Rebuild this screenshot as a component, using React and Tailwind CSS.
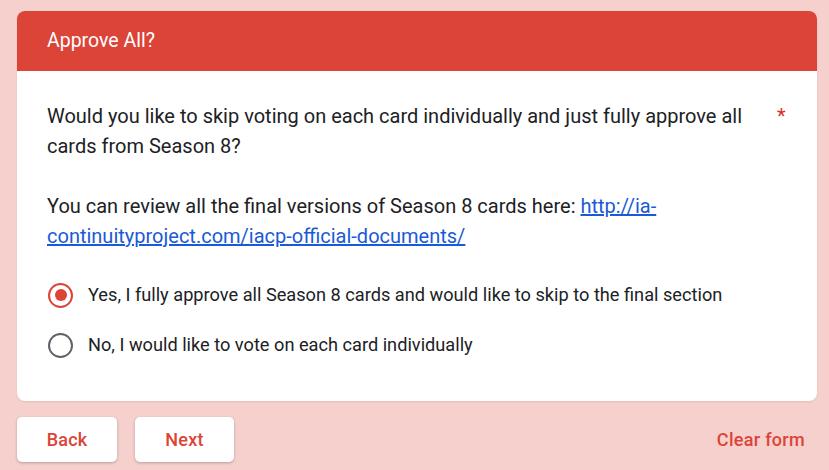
import React from "react";

function Radio({ checked }) {
  return (
    <div
      className={
        "w-[25px] h-[25px] rounded-full border-[2.5px] flex items-center justify-center shrink-0 " +
        (checked ? "border-[#db4437]" : "border-[#5f6368]")
      }
    >
      {checked && <div className="w-[12px] h-[12px] rounded-full bg-[#db4437]" />}
    </div>
  );
}

export default function App() {
  return (
    <div
      className="w-[829px] h-[470px] bg-[#f6d0cd] pl-[17px] pt-[11px] overflow-hidden"
      style={{ fontFamily: "Roboto, 'Liberation Sans', sans-serif" }}
    >
      <div className="w-[800px] bg-white rounded-[8px] overflow-hidden shadow-[0_1px_2px_rgba(0,0,0,0.08)]">
        <div className="h-[60px] bg-[#db4437] px-[30px] flex items-center">
          <span className="text-white text-[19.5px]">Approve All?</span>
        </div>
        <div className="pt-[30px] px-[30px] pb-[31px]">
          <div className="flex">
            <div className="flex-1 text-[20px] leading-[30px] text-[#202124]">
              Would you like to skip voting on each card individually and just fully approve all cards from Season 8?
              <br />
              <br />
              You can review all the final versions of Season 8 cards here:{" "}
              <a href="#" className="text-[#1a5ad6] underline">
                http://ia-continuityproject.com/iacp-official-documents/
              </a>
            </div>
            <span className="text-[#d93025] text-[20px] leading-[30px] w-[10px] ml-[8px] shrink-0">*</span>
          </div>
          <div className="mt-[19px]">
            <div className="h-[50px] flex items-center gap-[15px] pl-[1px]">
              <Radio checked />
              <span className="text-[18.2px] text-[#202124]">
                Yes, I fully approve all Season 8 cards and would like to skip to the final section
              </span>
            </div>
            <div className="h-[50px] flex items-center gap-[15px] pl-[1px]">
              <Radio />
              <span className="text-[18.2px] text-[#202124]">
                No, I would like to vote on each card individually
              </span>
            </div>
          </div>
        </div>
      </div>
      <div className="w-[800px] mt-[16px] flex items-center">
        <button className="w-[100px] h-[45px] bg-white rounded-[5px] text-[#db4437] text-[18px] font-medium tracking-[0.2px] shadow-[0_1px_3px_rgba(0,0,0,0.25)]">
          Back
        </button>
        <button className="ml-[18px] w-[99px] h-[45px] bg-white rounded-[5px] text-[#db4437] text-[18px] font-medium tracking-[0.2px] shadow-[0_1px_3px_rgba(0,0,0,0.25)]">
          Next
        </button>
        <button className="ml-auto pr-[12px] h-[45px] text-[#db4437] text-[18px] font-medium tracking-[0.3px]">
          Clear form
        </button>
      </div>
    </div>
  );
}
